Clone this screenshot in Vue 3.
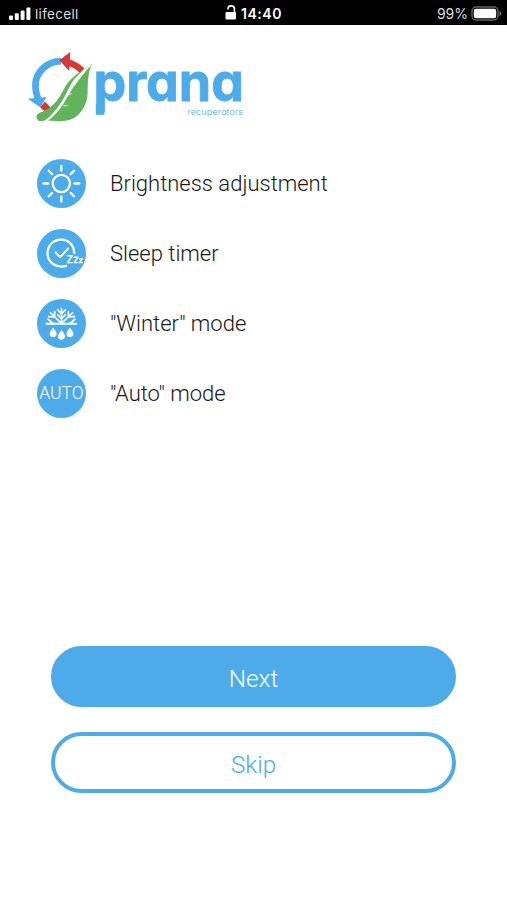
<template>
    <div class="screen">
        <header class="status-bar">
            <div class="carrier">
                <svg width="23" height="14" viewBox="0 0 23 14" fill="#fff">
                    <rect x="0" y="8.5" width="4" height="4.5" rx="1" />
                    <rect x="5.8" y="6.3" width="4" height="6.7" rx="1" />
                    <rect x="11.6" y="3.6" width="4" height="9.4" rx="1" />
                    <rect x="17.4" y="0.5" width="4" height="12.5" rx="1" />
                </svg>
                <span>lifecell</span>
            </div>
            <div class="clock">
                <svg width="12" height="18" viewBox="0 0 12 18">
                    <rect x="0.5" y="7" width="10.5" height="7.5" rx="1" fill="#fff" />
                    <path d="M3 4.6V3.6C3 0 9.4 0 9.4 3.6V7.5" fill="none" stroke="#fff" stroke-width="1.6" />
                </svg>
                <strong>14:40</strong>
            </div>
            <div class="battery">
                <span>99%</span>
                <svg width="31" height="16" viewBox="0 0 31 16">
                    <rect x="1" y="1" width="26" height="13" rx="4" fill="none" stroke="#626262" stroke-width="1.4" />
                    <rect x="2.8" y="2.8" width="22.4" height="9.4" rx="2.2" fill="#fff" />
                    <path d="M28.5 5C31 6 31 9 28.5 10Z" fill="#777" />
                </svg>
            </div>
        </header>

        <main>
            <svg class="logo" width="230" height="80" viewBox="20 47 230 80">
                <!-- circulation arrows -->
                <path d="M61 61.2C46 61.5 35.5 73 35.5 85C35.5 90 36.3 95 38.3 99" fill="none" stroke="#4dabe9" stroke-width="6.8" />
                <path d="M27.7 98.8L46.5 97L40.5 107.5Z" fill="#4dabe9" />
                <path d="M68 62.3Q76 64.5 82 70.5" fill="none" stroke="#d93734" stroke-width="6.5" />
                <path d="M59.3 60.3L70.3 52L69.3 71Z" fill="#d93734" />
                <path d="M40.2 107.5L45 101.5L50.5 107.5L45.5 112Z" fill="#d93734" />
                <!-- leaf -->
                <path d="M92.5 63C85 69 72 76 66.5 84.5C62 92 59 100 51 106.5C46 110.5 42 111.8 39.5 112.8C34.8 115 36 121.2 41 121.2C46 121.2 50 116.5 54 112C64 101 69 87 73 81C77 75 85 70 92.5 63Z" fill="#61b45c" />
                <path d="M92.5 63C88 71 87.7 83 87.6 93C87.5 104 81 114 74 118C67 122.2 56 121.3 48 120.6C57 114 63 105 68 96C74 85 82 76 92.5 63Z" fill="#61b45c" />
                <path d="M45.5 121.5C60 110 64 101 71 86.5C75 78.5 81 73.5 90.5 65" fill="none" stroke="#fff" stroke-width="1.6" />
                <path d="M67.5 95.5L68.8 91L69.5 93.5L72.5 93.3L70 95ZM61.5 105.3L70 105L65 106.5ZM72 84L74.5 81L75 82.8L77 82.5L75 84.2Z" fill="#fff" fill-opacity="0.7" />
                <rect x="95.8" y="104" width="8.6" height="10.8" fill="#4dabe9" />
                <text class="wordmark" x="93.4" y="101" textLength="150.6" lengthAdjust="spacingAndGlyphs">prana</text>
                <text class="tagline" x="187.5" y="114.5" textLength="55.5" lengthAdjust="spacingAndGlyphs">recuperators</text>
            </svg>

            <ul class="features">
                <li v-for="item in features" :key="item.icon">
                    <span class="icon">
                        <svg v-if="item.icon === 'sun'" viewBox="0 0 50 50">
                            <circle cx="24.8" cy="25" r="8.8" stroke-width="2.3" />
                            <path d="M24.8 7v5M24.8 38.5v5M6.5 25h5M38.2 25h5M12 12l3.4 3.4M34.4 34.6L37.8 38M12 38l3.4-3.4M34.4 15.4L37.8 12" stroke-width="2.3" />
                        </svg>
                        <svg v-else-if="item.icon === 'sleep'" viewBox="0 0 50 50">
                            <path d="M38 24.5C37.7 16 31.7 10.8 24.7 10.8C16.7 10.8 10.7 17 10.7 24.8C10.7 34 19.7 40.5 29.7 37.6" stroke-width="2.3" />
                            <path d="M19.2 24L23.7 28.8L31.7 20" stroke-width="2.1" />
                            <path d="M31 27.3h5l-5 7h5M38 28.8h3.8l-3.8 5.5h3.8M43.4 30.3h3l-2.9 4h2.9" stroke-width="1.4" />
                        </svg>
                        <svg v-else-if="item.icon === 'winter'" viewBox="0 0 50 50">
                            <path d="M9.6 25.3h30.4" stroke-width="2.2" />
                            <path d="M25 25V9.8M25 25L13.8 14M25 25L36.2 14M21 11l4 4.2 4-4.2M21.2 16.2l3.8 4 3.8-4M18 12.8v5.4l-6.2-.2M32 12.8v5.4l6.2-.2M11.2 20.6l5 4.4M38.8 20.6l-5 4.4" stroke-width="1.7" />
                            <path class="drop" d="M16.5 29C15 31.5 13 33 13 35.4a3.5 3.5 0 0 0 7 0C20 33 18 31.5 16.5 29ZM25 31.7C23.5 34.2 21.5 35.7 21.5 38.1a3.5 3.5 0 0 0 7 0C28.5 35.7 26.5 34.2 25 31.7ZM33.6 29C32.1 31.5 30.1 33 30.1 35.4a3.5 3.5 0 0 0 7 0C37.1 33 35.1 31.5 33.6 29Z" />
                        </svg>
                        <span v-else class="auto">AUTO</span>
                    </span>
                    <span class="label">{{ item.label }}</span>
                </li>
            </ul>
        </main>

        <footer class="actions">
            <button class="next">Next</button>
            <button class="skip">Skip</button>
        </footer>
    </div>
</template>

<script setup>
import { ref } from 'vue'

const features = ref([
    { icon: 'sun', label: 'Brightness adjustment' },
    { icon: 'sleep', label: 'Sleep timer' },
    { icon: 'winter', label: '"Winter" mode' },
    { icon: 'auto', label: '"Auto" mode' },
])
</script>

<style>
body {
    margin: 0;
    background-color: #fff;
}
</style>

<style scoped>
.screen {
    display: flex;
    flex-direction: column;
    box-sizing: border-box;
    width: 507px;
    height: 900px;
    padding-bottom: 107px;
    background-color: #fff;
    font-family: Roboto, sans-serif;
}
.status-bar {
    display: grid;
    grid-template-columns: 1fr auto 1fr;
    align-items: center;
    box-sizing: border-box;
    height: 25px;
    padding: 2px 5px 0 9px;
    background-color: #000;
    color: #fff;
    font-family: Inter, sans-serif;
    font-size: 13.5px;
}
.carrier,
.clock,
.battery {
    display: flex;
    align-items: center;
}
.carrier {
    gap: 3px;
    color: #ddd;
    letter-spacing: 0.3px;
}
.clock {
    gap: 4px;
    padding-right: 4px;
}
.clock strong {
    font-size: 14px;
    font-weight: 600;
    letter-spacing: 0.5px;
}
.battery {
    justify-content: flex-end;
    gap: 3px;
    color: #ddd;
    font-size: 14px;
}
main {
    flex: 1;
}
.logo {
    display: block;
    margin: 22px 0 0 20px;
}
.wordmark {
    fill: #4dabe9;
    stroke: #4dabe9;
    stroke-width: 0.8px;
    font-family: Inter, sans-serif;
    font-size: 52.5px;
    font-weight: 700;
    font-feature-settings: "cv11" 1;
}
.tagline {
    fill: #4dabe9;
    font-family: Inter, sans-serif;
    font-size: 9px;
    font-weight: 300;
    font-feature-settings: "cv11" 1;
}
.features {
    display: flex;
    flex-direction: column;
    gap: 21px;
    margin: 32px 0 0;
    padding: 0 0 0 37px;
    list-style: none;
}
.features li {
    display: flex;
    align-items: center;
    gap: 24px;
    height: 49px;
}
.icon {
    display: flex;
    align-items: center;
    justify-content: center;
    width: 49px;
    height: 49px;
    border-radius: 50%;
    background-color: #4dabe9;
}
.icon svg {
    width: 49px;
    height: 49px;
    fill: none;
    stroke: #fff;
    stroke-linecap: round;
    stroke-linejoin: round;
}
.icon .drop {
    fill: #fff;
    stroke: none;
}
.auto {
    padding-bottom: 2px;
    color: #fff;
    font-size: 17.5px;
    font-weight: 300;
}
.label {
    padding-bottom: 1px;
    color: #171717;
    font-size: 22px;
    font-weight: 300;
}
.actions {
    display: flex;
    flex-direction: column;
    gap: 25px;
    padding: 0 51px;
}
.actions button {
    box-sizing: border-box;
    height: 61px;
    padding: 3px 0 0;
    border: 4px solid #4dabe9;
    border-radius: 31px;
    font-family: Roboto, sans-serif;
    font-size: 24.3px;
    font-weight: 300;
}
.next {
    background-color: #4dabe9;
    color: #fff;
}
.skip {
    background-color: #fff;
    color: #4dabe9;
}
</style>
